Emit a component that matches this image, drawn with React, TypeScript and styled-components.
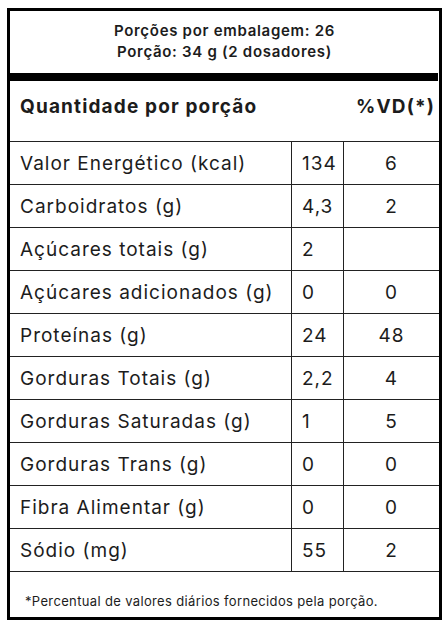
import React from "react";
import styled, { createGlobalStyle } from "styled-components";

const Global = createGlobalStyle`
  html, body { margin: 0; padding: 0; background: #fff; }
  body { font-family: Inter, "Noto Sans", sans-serif; color: #1c1c1c; }
`;

const Page = styled.div`
  padding: 8px 5px 4px 7px;
`;

const Label = styled.div`
  width: 429px;
  height: 606px;
  border: 3px solid #000;
  display: flex;
  flex-direction: column;
`;

const Serving = styled.div`
  height: 62px;
  display: flex;
  flex-direction: column;
  align-items: center;
  justify-content: center;
  font-size: 15px;
  font-weight: 600;
  letter-spacing: 0.7px;
  line-height: 21px;
  padding-bottom: 3px;
  box-sizing: border-box;
`;

const ThickBar = styled.div`
  height: 8px;
  background: #000;
  margin-right: 1px;
`;

const Table = styled.table`
  width: 100%;
  border-collapse: separate;
  border-spacing: 0;
  table-layout: fixed;
`;

const HeadCell = styled.th<{ $align?: string }>`
  height: 51px;
  padding: 0 ${(p) => (p.$align === "right" ? "12px" : "10px")} 9px;
  text-align: ${(p) => p.$align || "left"};
  font-size: 19px;
  font-weight: 700;
  letter-spacing: 1.15px;
  border-bottom: 1px solid #222;
  vertical-align: middle;
`;

const Cell = styled.td<{ $center?: boolean; $last?: boolean }>`
  height: 42px;
  padding: 0 0 0 ${(p) => (p.$center ? "0" : "10px")};
  text-align: ${(p) => (p.$center ? "center" : "left")};
  font-size: 19px;
  font-weight: 400;
  letter-spacing: 1px;
  border-bottom: 1px solid #222;
  border-right: ${(p) => (p.$last ? "none" : "1px solid #222")};
  white-space: nowrap;
  vertical-align: middle;
`;

const Footer = styled.div`
  flex: 1;
  display: flex;
  align-items: flex-end;
  padding: 0 0 8px 15px;
  font-size: 13px;
  letter-spacing: 0.35px;
`;

const rows: [string, string, string][] = [
  ["Valor Energético (kcal)", "134", "6"],
  ["Carboidratos (g)", "4,3", "2"],
  ["Açúcares totais (g)", "2", ""],
  ["Açúcares adicionados (g)", "0", "0"],
  ["Proteínas (g)", "24", "48"],
  ["Gorduras Totais (g)", "2,2", "4"],
  ["Gorduras Saturadas (g)", "1", "5"],
  ["Gorduras Trans (g)", "0", "0"],
  ["Fibra Alimentar (g)", "0", "0"],
  ["Sódio (mg)", "55", "2"],
];

export default function App() {
  return (
    <>
      <Global />
      <Page>
        <Label>
          <Serving>
            <div>Porções por embalagem: 26</div>
            <div>Porção: 34 g (2 dosadores)</div>
          </Serving>
          <ThickBar />
          <Table>
            <colgroup>
              <col style={{ width: 282 }} />
              <col style={{ width: 52 }} />
              <col />
            </colgroup>
            <thead>
              <tr>
                <HeadCell colSpan={2}>Quantidade por porção</HeadCell>
                <HeadCell $align="right">%VD(*)</HeadCell>
              </tr>
            </thead>
            <tbody>
              {rows.map(([name, qty, vd]) => (
                <tr key={name}>
                  <Cell>{name}</Cell>
                  <Cell>{qty}</Cell>
                  <Cell $center $last>
                    {vd}
                  </Cell>
                </tr>
              ))}
            </tbody>
          </Table>
          <Footer>*Percentual de valores diários fornecidos pela porção.</Footer>
        </Label>
      </Page>
    </>
  );
}
